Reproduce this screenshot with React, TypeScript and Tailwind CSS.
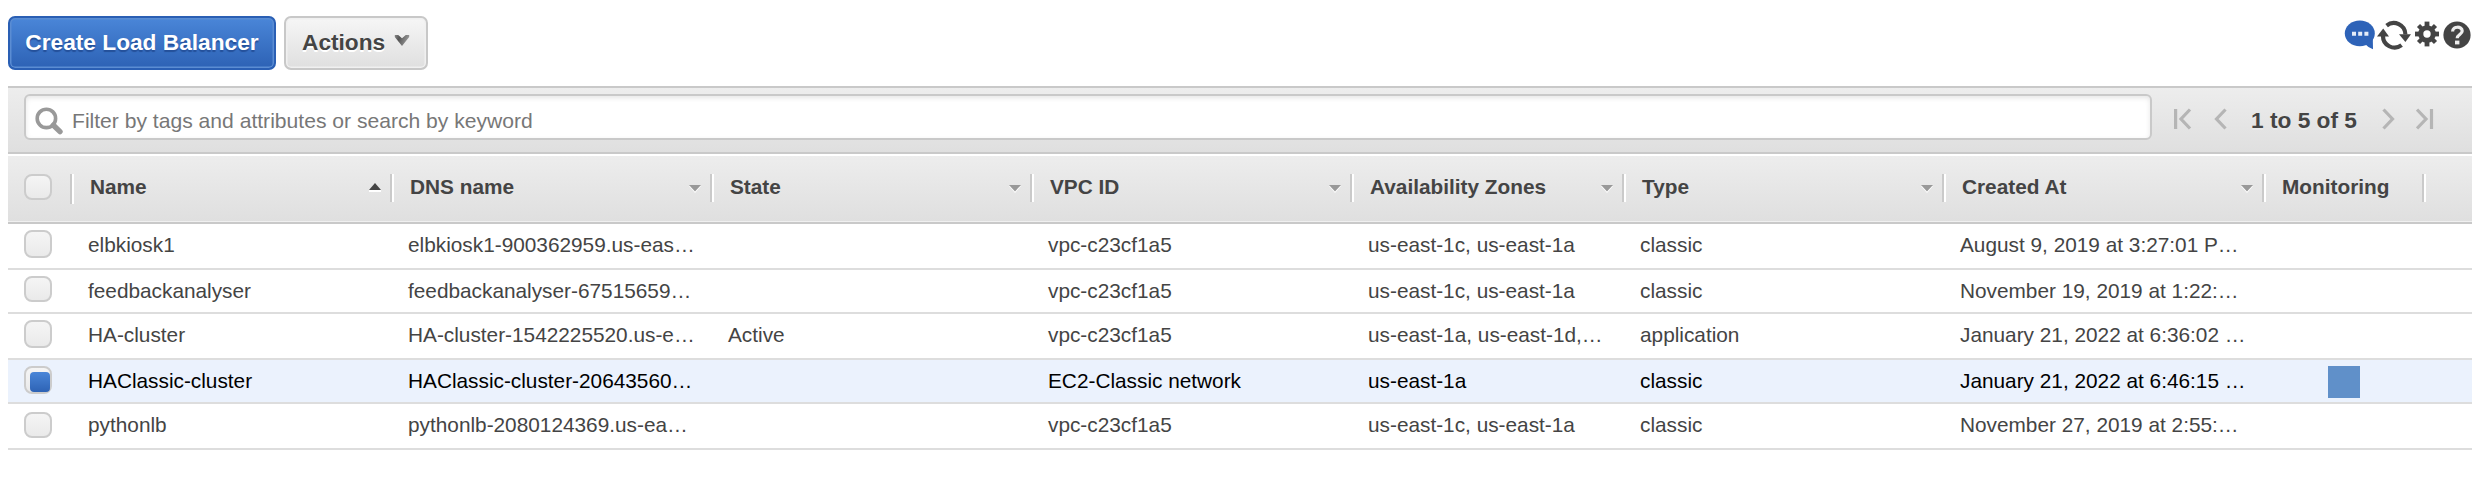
import React from "react";

type Row = {
  cells: string[];
  height: string;
  box: string;
  selected?: boolean;
};

const rows: Row[] = [
  {
    cells: ["elbkiosk1", "elbkiosk1-900362959.us-eas…", "", "vpc-c23cf1a5", "us-east-1c, us-east-1a", "classic", "August 9, 2019 at 3:27:01 P…"],
    height: "h-[46px]",
    box: "mt-[6px] h-[28px]",
  },
  {
    cells: ["feedbackanalyser", "feedbackanalyser-67515659…", "", "vpc-c23cf1a5", "us-east-1c, us-east-1a", "classic", "November 19, 2019 at 1:22:…"],
    height: "h-[44px]",
    box: "mt-[6px] h-[26px]",
  },
  {
    cells: ["HA-cluster", "HA-cluster-1542225520.us-e…", "Active", "vpc-c23cf1a5", "us-east-1a, us-east-1d,…", "application", "January 21, 2022 at 6:36:02 …"],
    height: "h-[46px]",
    box: "mt-[6px] h-[28px]",
  },
  {
    cells: ["HAClassic-cluster", "HAClassic-cluster-20643560…", "", "EC2-Classic network", "us-east-1a", "classic", "January 21, 2022 at 6:46:15 …"],
    height: "h-[44px]",
    box: "mt-[6px] h-[28px]",
    selected: true,
  },
  {
    cells: ["pythonlb", "pythonlb-2080124369.us-ea…", "", "vpc-c23cf1a5", "us-east-1c, us-east-1a", "classic", "November 27, 2019 at 2:55:…"],
    height: "h-[46px]",
    box: "mt-[8px] h-[26px]",
  },
];

const headers = ["Name", "DNS name", "State", "VPC ID", "Availability Zones", "Type", "Created At", "Monitoring"];

const columns =
  "grid grid-cols-[62px_320px_320px_320px_320px_272px_320px_320px_160px_1fr]";

function Checkbox({ className, checked = false }: { className: string; checked?: boolean }) {
  return (
    <div
      className={`ml-4 flex w-[28px] items-end justify-end rounded-[8px] border-2 border-[#cccccc] bg-linear-to-b from-[#f5f5f5] to-[#eaeaea] ${className}`}
    >
      {checked && <div className="h-[20px] w-[20px] rounded-[4px] bg-linear-to-b from-[#4a86d8] to-[#2e63b5]" />}
    </div>
  );
}

function Divider({ className = "h-[28px]" }: { className?: string }) {
  return <div className={`mt-[18px] w-[4px] shrink-0 border-l-2 border-[#cacaca] bg-white ${className}`} />;
}

function SortArrow({ up }: { up: boolean }) {
  return up ? (
    <svg className="mt-[26px] mr-[9px] h-[10px] w-[12px] shrink-0" viewBox="0 0 12 10">
      <path d="M0 9h12" stroke="#fff" strokeWidth="2" />
      <path d="M6 1l6 7H0z" fill="#444" />
    </svg>
  ) : (
    <svg className="mt-[28px] mr-[9px] h-[10px] w-[12px] shrink-0" viewBox="0 0 12 10">
      <path d="M0 2h12L6 9z" fill="#fff" />
      <path d="M0 1h12L6 7.4z" fill="#999" />
    </svg>
  );
}

function ToolIcons() {
  return (
    <div className="mt-[4px] mr-px flex items-start">
      <svg className="h-[32px] w-[32px]" viewBox="0 0 32 32">
        <ellipse cx="15.8" cy="13.4" rx="15" ry="12.8" fill="#2e63b8" />
        <path d="M17 24.5L28.8 18l.2 11.2q-4.4-1-7.4-4.6z" fill="#2e63b8" />
        <path d="M8 11.8h4v4H8zM14.2 11.8h4v4h-4zM20.4 11.8h4v4h-4z" fill="#e4ecf8" />
      </svg>
      <svg className="ml-[1px] h-[32px] w-[34px]" viewBox="0 0 34 32">
        <g fill="none" stroke="#444" strokeWidth="4.2">
          <path d="M9.6 5.6A11.6 11.6 0 0 1 28.4 14.5" />
          <path d="M24.6 25.2A11.6 11.6 0 0 1 6 15.5" />
        </g>
        <path d="M22 14.2h12L28.4 22z" fill="#444" />
        <path d="M0 16.6h12L6.2 8.4z" fill="#444" />
      </svg>
      <svg className="mt-[1px] ml-[4px] h-[26px] w-[24px]" viewBox="0 0 24 26">
        <g fill="#444">
          <path d="M9.6 .6h4.8v24.8H9.6z" />
          <path d="M0 10.6h24v4.8H0z" />
          <path d="M9.8 1h4.4v24H9.8z" transform="rotate(45 12 13)" />
          <path d="M9.8 1h4.4v24H9.8z" transform="rotate(-45 12 13)" />
          <circle cx="12" cy="13" r="8.8" />
        </g>
        <circle cx="12" cy="13" r="3.7" fill="#fff" />
      </svg>
      <svg className="mt-[1px] ml-[4px] h-[28px] w-[28px]" viewBox="0 0 28 28">
        <circle cx="14" cy="14" r="13.6" fill="#444" />
        <path d="M9.6 10.4C9.6 4.8 19.2 5 19.2 10c0 3.4-5 3.6-5 7.2" fill="none" stroke="#eee" strokeWidth="3.2" />
        <path d="M12 19.6h4.4v3.8H12z" fill="#eee" />
      </svg>
    </div>
  );
}

function Pager() {
  return (
    <div className="mt-[20px] flex h-[22px] items-center">
      <svg className="ml-[22px] h-[22px] w-[18px]" viewBox="0 0 18 22" fill="none" stroke="#b5b5b5" strokeWidth="3.2">
        <path d="M1.6 1v20M16 1.5L7 11l9 9.5" />
      </svg>
      <svg className="ml-[22px] h-[22px] w-[14px]" viewBox="0 0 14 22" fill="none" stroke="#b5b5b5" strokeWidth="3.2">
        <path d="M11.5 1.5L2.5 11l9 9.5" />
      </svg>
      <span className="mt-[2px] ml-[23px] w-[108px] text-[22.7px] leading-[22px] font-bold whitespace-nowrap text-[#444] [text-shadow:0_2px_0_#fff4]">
        1 to 5 of 5
      </span>
      <svg className="ml-[23px] h-[22px] w-[14px]" viewBox="0 0 14 22" fill="none" stroke="#b5b5b5" strokeWidth="3.2">
        <path d="M1.5 1.5l9 9.5-9 9.5" />
      </svg>
      <svg className="ml-[20px] h-[22px] w-[18px]" viewBox="0 0 18 22" fill="none" stroke="#b5b5b5" strokeWidth="3.2">
        <path d="M1 1.5l9 9.5-9 9.5M15.5 1v20" />
      </svg>
    </div>
  );
}

export default function App() {
  return (
    <div className="h-[494px] w-[2484px] bg-white pr-3 pl-2 font-['Liberation_Sans',Arial,sans-serif] text-[#444]">
      <header className="flex h-[86px] items-start justify-between pt-4">
        <div className="flex gap-2">
          <button className="h-[54px] w-[268px] rounded-[7px] border-2 border-[#2a5fb4] bg-linear-to-b from-[#4a86d8] to-[#2d62b5] pb-[2px] text-center text-[22.7px] leading-[48px] font-bold whitespace-nowrap text-white [box-shadow:inset_0_0_0_1.5px_#5b8dd3] [text-shadow:0_2px_1px_#24509a]">
            Create Load Balancer
          </button>
          <button className="flex h-[54px] w-[144px] rounded-[7px] border-2 border-[#c8c8c8] bg-linear-to-b from-[#f6f6f6] to-[#dfdfdf] pl-[16px] text-[22.7px] leading-[48px] font-bold text-[#444] [box-shadow:inset_0_0_0_1.5px_#f0f0f0] [text-shadow:0_2px_0_#fff]">
            <span className="w-[92px] text-left">Actions</span>
            <svg className="mt-[15px] h-[14px] w-[16px]" viewBox="0 0 16 14">
              <defs>
                <linearGradient id="caret" x1="0" y1="0" x2="1" y2="0.3">
                  <stop offset="0" stopColor="#888" />
                  <stop offset="0.35" stopColor="#555" />
                  <stop offset="1" stopColor="#999" />
                </linearGradient>
              </defs>
              <path d="M.8 2h3.4L8 5.2 11.8 2h3.4v2L8 13 .8 4z" fill="url(#caret)" />
            </svg>
          </button>
        </div>
        <ToolIcons />
      </header>

      <div className="flex h-[68px] border-y-2 border-[#c9c9c9] bg-linear-to-b from-[#ededed] to-[#dfdfdf]">
        <div className="mt-[6px] ml-4 flex h-[46px] w-[2128px] rounded-[6px] border-2 border-[#c9c9c9] bg-white shadow-[inset_0_2px_5px_#e6e6e6]">
          <svg className="mt-[11px] ml-[9px] h-[28px] w-[28px]" viewBox="0 0 28 28" fill="none" stroke="#999">
            <circle cx="11.4" cy="11.4" r="9.2" strokeWidth="3.6" />
            <path d="M18.4 18.2l6.6 6.4" strokeWidth="5.4" strokeLinecap="round" />
          </svg>
          <span className="ml-[9px] text-[21.1px] leading-[49px] whitespace-nowrap text-[#777]">
            Filter by tags and attributes or search by keyword
          </span>
        </div>
        <Pager />
      </div>

      <div
        className={`${columns} mt-[2px] h-[68px] border-b-2 border-[#c9c9c9] bg-linear-to-b from-[#ededed] to-[#dfdfdf] shadow-[inset_0_-1px_0_#f0f0f0]`}
      >
        <Checkbox className="mt-[18px] h-[26px]" />
        {headers.map((header, i) => (
          <div key={header} className="flex">
            <Divider className={i === 0 ? "h-[30px]" : "h-[28px]"} />
            <span className="ml-[16px] grow text-[20.8px] leading-[61px] font-bold whitespace-nowrap">{header}</span>
            {i < 7 && <SortArrow up={i === 0} />}
          </div>
        ))}
        <Divider />
      </div>

      {rows.map((row) => (
        <div
          key={row.cells[0]}
          className={`${columns} ${row.height} border-b-2 border-[#dddddd] ${row.selected ? "bg-[#ebf2fd] text-black" : "bg-white"}`}
        >
          <Checkbox className={row.box} checked={row.selected} />
          {row.cells.map((cell, i) => (
            <div key={i} className="pl-[18px] text-[20.8px] leading-[41px] whitespace-nowrap">
              {cell}
            </div>
          ))}
          <div>{row.selected && <div className="mt-[6px] ml-[66px] h-[32px] w-[32px] bg-[#6090c9]" />}</div>
        </div>
      ))}
    </div>
  );
}
